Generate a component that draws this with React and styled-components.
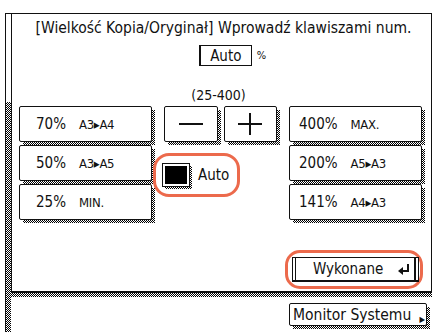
import styled, { createGlobalStyle } from "styled-components"

const dots = "repeating-conic-gradient(#000 0 25%, #fff 0 50%) 0 0 / 2px 2px";
const ring = "#ec6a4c";

const GlobalStyle = createGlobalStyle`
    html, body {
        margin: 0;
        background: #fff;
    }
    body {
        font-family: "DejaVu Sans Condensed", "Liberation Sans Narrow", "DejaVu Sans", sans-serif;
        font-stretch: condensed;
        color: #111;
    }
`;

const Screen = styled.div`
    width: 432px;
    height: 332px;
    box-sizing: border-box;
    padding: 13px 0 0 5px;
    display: flex;
    overflow: hidden;
`;
const LeftStrip = styled.div`
    width: 5px;
    border-left: 1px solid #111;
    border-top: 1px solid #111;
    background: linear-gradient(#fff, #fff) 0 0 / 100% 88px no-repeat, ${dots};
`;
const Main = styled.div`
    flex: 1;
    display: flex;
    flex-direction: column;
`;
const Panel = styled.div`
    height: 280px;
    box-sizing: border-box;
    border: 1px solid #111;
    border-bottom-width: 2px;
    display: flex;
    flex-direction: column;
    align-items: center;
    padding: 0 9px 0 7px;
`;
const Header = styled.div`
    margin-top: 4px;
    line-height: 21px;
    font-size: 15.5px;
    white-space: nowrap;
    padding-left: 6px;
`;
const AutoRow = styled.div`
    margin-top: 6px;
    display: flex;
    align-items: center;
    gap: 5px;
    padding-left: 24px;
`;
const AutoBox = styled.div`
    width: 50px;
    height: 19px;
    border: 1px solid #111;
    border-left-width: 2px;
    display: flex;
    align-items: center;
    justify-content: center;
    font-size: 15px;
`;
const Percent = styled.span`
    font-size: 11px;
`;
const Range = styled.div`
    margin-top: 22px;
    line-height: 15px;
    font-size: 14px;
    padding-right: 4px;
`;
const Grid = styled.div`
    isolation: isolate;
    align-self: stretch;
    margin-top: 3px;
    display: grid;
    grid-template-columns: 133px 113px 133px;
    grid-auto-rows: 36px;
    column-gap: 12px;
    row-gap: 3px;
`;
const Key = styled.button`
    position: relative;
    box-sizing: border-box;
    height: 36px;
    margin: 0;
    display: flex;
    align-items: center;
    justify-content: ${({ $center }) => ($center ? "center" : "flex-start")};
    gap: 13px;
    padding: 0 0 0 ${({ $pad }) => $pad || 0}px;
    border: 1px solid #111;
    border-radius: 2px;
    background: #fff;
    font: inherit;
    color: inherit;
    &::before {
        content: "";
        position: absolute;
        left: 3px;
        top: 3px;
        right: -4px;
        bottom: -4px;
        background: ${dots};
        z-index: -1;
    }
`;
const Num = styled.span`
    font-size: 15px;
`;
const Tag = styled.span`
    font-size: 13px;
    letter-spacing: -0.3px;
`;
const Middle = styled.div`
    grid-column: 2;
    grid-row: 1 / span 3;
    display: flex;
    flex-direction: column;
`;
const Stepper = styled.div`
    display: grid;
    grid-template-columns: 1fr 1fr;
    gap: 6px;
`;
const AutoToggle = styled.div`
    margin: 11px 0 0 -11px;
    width: 87px;
    height: 44px;
    box-sizing: border-box;
    border: 3px solid ${ring};
    border-radius: 16px;
    display: flex;
    align-items: center;
    gap: 8px;
    padding-left: 6px;
    font-size: 15px;
`;
const Check = styled.div`
    position: relative;
    width: 28px;
    height: 24px;
    box-sizing: border-box;
    border: 1px solid #111;
    padding: 2px;
    background: #fff;
    &::before {
        content: "";
        position: absolute;
        left: 2px;
        top: 2px;
        right: -3px;
        bottom: -3px;
        background: ${dots};
        z-index: -1;
    }
`;
const CheckFill = styled.div`
    width: 100%;
    height: 100%;
    background: #000;
`;
const Spacer = styled.div`
    flex: 1;
`;
const DoneRing = styled.div`
    align-self: flex-end;
    margin: 0 -1px 2px 0;
    width: 138px;
    height: 39px;
    box-sizing: border-box;
    border: 3px solid ${ring};
    border-radius: 15px;
    display: flex;
    align-items: center;
    padding: 0 1px 0 4px;
`;
const DoneButton = styled.button`
    flex: 1;
    height: 25px;
    margin: 0;
    padding: 0 2px;
    border: 1px solid #111;
    border-bottom-width: 2px;
    background: #fff;
    font: inherit;
    color: inherit;
    display: flex;
`;
const DoneInner = styled.span`
    flex: 1;
    border-left: 1px solid #111;
    border-right: 2px solid #111;
    display: flex;
    align-items: center;
    justify-content: space-between;
    padding: 0 4px 0 17px;
    font-size: 15px;
`;
const Band = styled.div`
    height: 4px;
    background: ${dots};
`;
const Footer = styled.div`
    isolation: isolate;
    display: flex;
    justify-content: flex-end;
    padding: 6px 5px 0 0;
`;
const MonitorButton = styled(Key)`
    width: 138px;
    height: 23px;
    padding: 0 1px 0 3px;
    gap: 0;
    justify-content: space-between;
    font-size: 15.5px;
`;
const Pointer = styled.span`
    align-self: flex-end;
    font-size: 8px;
    line-height: 10px;
`;

const MinusIcon = () => (
    <svg width="24" height="22" viewBox="0 0 24 22">
        <line x1="0" y1="11" x2="24" y2="11" stroke="#111" strokeWidth="2" />
    </svg>
);
const PlusIcon = () => (
    <svg width="24" height="22" viewBox="0 0 24 22">
        <line x1="0" y1="11" x2="24" y2="11" stroke="#111" strokeWidth="2" />
        <line x1="12" y1="0" x2="12" y2="22" stroke="#111" strokeWidth="2" />
    </svg>
);
const ReturnIcon = () => (
    <svg width="13" height="12" viewBox="0 0 13 12">
        <path d="M11 1 V8 H5" fill="none" stroke="#111" strokeWidth="2" />
        <polygon points="1,8 6,4 6,12" fill="#111" />
    </svg>
);

const presetsLeft = [
    { num: "70%", tag: "A3▸A4" },
    { num: "50%", tag: "A3▸A5" },
    { num: "25%", tag: "MIN." },
];
const presetsRight = [
    { num: "400%", tag: "MAX." },
    { num: "200%", tag: "A5▸A3" },
    { num: "141%", tag: "A4▸A3" },
];

const App = () => {
    return (
        <>
            <GlobalStyle />
            <Screen>
                <LeftStrip />
                <Main>
                    <Panel>
                        <Header>[Wielkość Kopia/Oryginał] Wprowadź klawiszami num.</Header>
                        <AutoRow>
                            <AutoBox>Auto</AutoBox>
                            <Percent>%</Percent>
                        </AutoRow>
                        <Range>(25-400)</Range>
                        <Grid>
                            {presetsLeft.map((p, i) => (
                                <Key key={p.num} $pad={16} style={{ gridColumn: 1, gridRow: i + 1 }}>
                                    <Num>{p.num}</Num>
                                    <Tag>{p.tag}</Tag>
                                </Key>
                            ))}
                            <Middle>
                                <Stepper>
                                    <Key $center><MinusIcon /></Key>
                                    <Key $center><PlusIcon /></Key>
                                </Stepper>
                                <AutoToggle>
                                    <Check><CheckFill /></Check>
                                    Auto
                                </AutoToggle>
                            </Middle>
                            {presetsRight.map((p, i) => (
                                <Key key={p.num} $pad={9} style={{ gridColumn: 3, gridRow: i + 1 }}>
                                    <Num>{p.num}</Num>
                                    <Tag>{p.tag}</Tag>
                                </Key>
                            ))}
                        </Grid>
                        <Spacer />
                        <DoneRing>
                            <DoneButton>
                                <DoneInner>
                                    Wykonane
                                    <ReturnIcon />
                                </DoneInner>
                            </DoneButton>
                        </DoneRing>
                    </Panel>
                    <Band />
                    <Footer>
                        <MonitorButton>
                            Monitor Systemu
                            <Pointer>▶</Pointer>
                        </MonitorButton>
                    </Footer>
                </Main>
            </Screen>
        </>
    )
}

export default App
